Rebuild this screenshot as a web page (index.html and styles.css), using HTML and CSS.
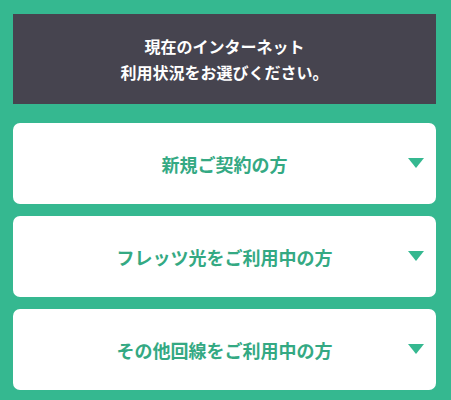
FILE: index.html
```html
<!DOCTYPE html>
<html lang="ja">
<head>
    <meta charset="UTF-8">
    <meta name="viewport" content="width=device-width, initial-scale=1.0">
    <title>利用状況の選択</title>
    <link rel="stylesheet" href="styles.css">
</head>
<body>
    <section id="select">
        <div class="select-head">
            現在のインターネット<br>
            利用状況をお選びください。
        </div>
        <div class="select-item">
            <span class="label">新規ご契約の方</span>
            <span class="arrow"></span>
        </div>
        <div class="select-item">
            <span class="label">フレッツ光をご利用中の方</span>
            <span class="arrow"></span>
        </div>
        <div class="select-item">
            <span class="label">その他回線をご利用中の方</span>
            <span class="arrow"></span>
        </div>
    </section>
</body>
</html>
```

FILE: styles.css
```css
body {
    margin: 0;
    background-color: #35b890;
    font-family: "Noto Sans CJK JP", "Noto Sans", sans-serif;
}
#select {
    width: 423px;
    padding: 14px 0 0 13px;
    display: flex;
    flex-direction: column;
    gap: 12px;
}
.select-head {
    height: 90px;
    margin-bottom: 7px;
    background-color: #46444f;
    color: white;
    font-size: 16px;
    font-weight: bold;
    line-height: 26px;
    text-align: center;
    display: flex;
    align-items: center;
    justify-content: center;
}
.select-item {
    position: relative;
    height: 81px;
    background-color: white;
    border-radius: 7px;
    display: flex;
    align-items: center;
    justify-content: center;
}
.label {
    color: #34a983;
    font-size: 18px;
    font-weight: bold;
}
.arrow {
    position: absolute;
    right: 12px;
    top: 35px;
    width: 0;
    height: 0;
    border-left: 8px solid transparent;
    border-right: 8px solid transparent;
    border-top: 10px solid #35b890;
}
```
